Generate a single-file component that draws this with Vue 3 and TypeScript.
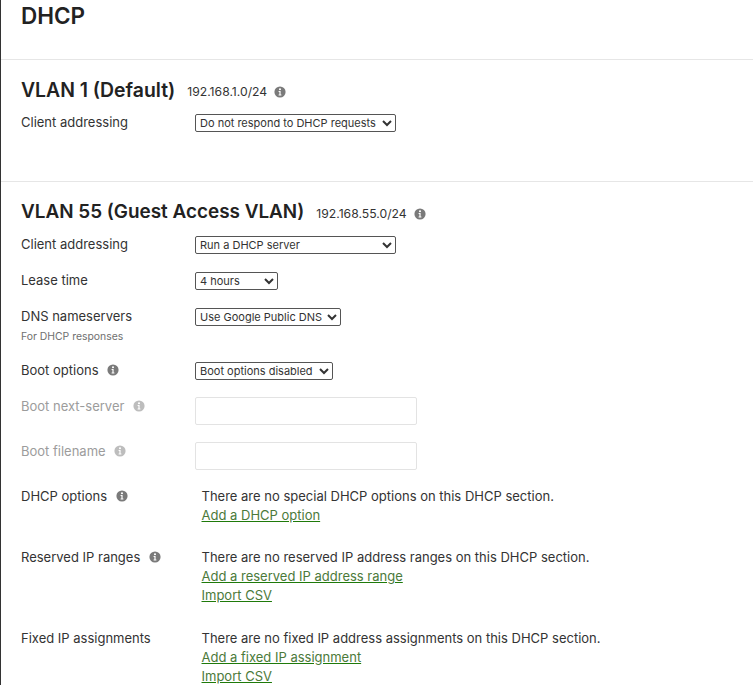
<template>
  <div class="page">
    <h1 class="title">DHCP</h1>

    <section class="vlan first">
      <div class="vlan-head">
        <h2>VLAN 1 (Default)</h2>
        <span class="subnet">192.168.1.0/24</span>
        <svg class="info" viewBox="0 0 12 12"><use href="#info-icon" /></svg>
      </div>
      <div class="row">
        <label>Client addressing</label>
        <select class="w-wide">
          <option>Do not respond to DHCP requests</option>
        </select>
      </div>
    </section>

    <section class="vlan second">
      <div class="vlan-head">
        <h2>VLAN 55 (Guest Access VLAN)</h2>
        <span class="subnet">192.168.55.0/24</span>
        <svg class="info" viewBox="0 0 12 12"><use href="#info-icon" /></svg>
      </div>

      <div v-for="row in selectRows" :key="row.label" class="row" :class="row.cls">
        <label>
          {{ row.label }}
          <svg v-if="row.info" class="info" viewBox="0 0 12 12"><use href="#info-icon" /></svg>
          <small v-if="row.hint">{{ row.hint }}</small>
        </label>
        <select :class="row.width">
          <option>{{ row.value }}</option>
        </select>
      </div>

      <div v-for="name in disabledRows" :key="name" class="row input-row">
        <label class="disabled">
          {{ name }}
          <svg class="info" viewBox="0 0 12 12"><use href="#info-icon" /></svg>
        </label>
        <input type="text" disabled />
      </div>

      <div v-for="block in textRows" :key="block.label" class="row text-row" :class="block.cls">
        <label>
          {{ block.label }}
          <svg v-if="block.info" class="info" viewBox="0 0 12 12"><use href="#info-icon" /></svg>
        </label>
        <div class="text-body">
          <p>{{ block.text }}</p>
          <a v-for="link in block.links" :key="link" href="#">{{ link }}</a>
        </div>
      </div>
    </section>

    <svg class="defs" width="0" height="0">
      <symbol id="info-icon" viewBox="0 0 12 12">
        <path
          fill-rule="evenodd"
          d="M6 .4a5.6 5.6 0 1 1 0 11.2A5.6 5.6 0 0 1 6 .4ZM6 2.2a1.05 1.05 0 1 0 0 2.1 1.05 1.05 0 0 0 0-2.1ZM4.6 5v1h.8v2.6h-.8v1h2.8v-1h-.8V5H4.6Z"
        />
      </symbol>
    </svg>
  </div>
</template>

<script setup lang="ts">
interface SelectRow {
  label: string
  value: string
  width: string
  info?: boolean
  hint?: string
  cls?: string
}

interface TextRow {
  label: string
  text: string
  links: string[]
  info?: boolean
  cls?: string
}

const selectRows: SelectRow[] = [
  { label: 'Client addressing', value: 'Run a DHCP server', width: 'w-wide' },
  { label: 'Lease time', value: '4 hours', width: 'w-lease' },
  { label: 'DNS nameservers', value: 'Use Google Public DNS', width: 'w-dns', hint: 'For DHCP responses', cls: 'has-hint' },
  { label: 'Boot options', value: 'Boot options disabled', width: 'w-boot', info: true }
]

const disabledRows = ['Boot next-server', 'Boot filename']

const textRows: TextRow[] = [
  {
    label: 'DHCP options',
    text: 'There are no special DHCP options on this DHCP section.',
    links: ['Add a DHCP option'],
    info: true,
    cls: 'options'
  },
  {
    label: 'Reserved IP ranges',
    text: 'There are no reserved IP address ranges on this DHCP section.',
    links: ['Add a reserved IP address range', 'Import CSV'],
    info: true
  },
  {
    label: 'Fixed IP assignments',
    text: 'There are no fixed IP address assignments on this DHCP section.',
    links: ['Add a fixed IP assignment', 'Import CSV']
  }
]
</script>

<style>
html,
body {
  background: #fff;
  overflow: hidden;
}
</style>

<style scoped>
.page {
  height: 685px;
  overflow: hidden;
  box-sizing: border-box;
  border-left: 1px solid #333;
  color: #333;
  font-family: Inter, "Liberation Sans", sans-serif;
  font-size: 13px;
}

.title {
  margin: 0;
  padding: 2px 20px 0;
  height: 59px;
  box-sizing: border-box;
  font-size: 22.5px;
  line-height: 28px;
  font-weight: 600;
  color: #222;
}

.vlan {
  border-top: 1px solid #e6e6e6;
  padding: 16px 20px 0;
}

.vlan.first {
  height: 122px;
  box-sizing: border-box;
}

.vlan.second {
  padding-top: 17px;
}

.vlan-head {
  display: flex;
  align-items: center;
  height: 26px;
  margin-bottom: 11px;
}

.first .vlan-head {
  position: relative;
  top: 1px;
}

.second .vlan-head {
  margin-bottom: 10px;
}

.vlan-head h2 {
  margin: 0;
  font-size: 18.9px;
  line-height: 26px;
  font-weight: 600;
  color: #222;
}

.first h2 {
  font-size: 19.4px;
}

.subnet {
  margin-left: 12px;
  margin-top: 3px;
  font-size: 12.2px;
  color: #333;
}

.vlan-head .info {
  margin-left: 7px;
  margin-top: 3px;
}

.info {
  width: 12px;
  height: 12px;
  fill: #7a7a7a;
  vertical-align: -1px;
  margin-left: 5px;
}

.row {
  display: flex;
  align-items: flex-start;
  height: 36px;
}

.row label {
  width: 174px;
  flex: none;
  line-height: 18px;
}

.row small {
  display: block;
  margin-top: 5px;
  font-size: 10.4px;
  line-height: 14px;
  color: #6f6f6f;
}

.has-hint {
  height: 54px;
}

select {
  height: 18px;
  margin-top: 1px;
  box-sizing: border-box;
  padding: 0;
  border: 1px solid #555;
  border-radius: 2px;
  background-color: #fff;
  color: #333;
  font-family: Inter, "Liberation Sans", sans-serif;
  font-size: 11px;
}

.w-wide {
  width: 201px;
}

.w-lease {
  width: 83px;
}

.w-dns {
  width: 146px;
}

.w-boot {
  width: 138px;
}

.input-row {
  height: 45px;
}

.disabled {
  color: #9c9c9c;
}

.disabled .info {
  fill: #bdbdbd;
}

input {
  width: 222px;
  height: 28px;
  box-sizing: border-box;
  border: 1px solid #e3e3e3;
  border-radius: 2px;
  background: #fff;
  padding: 0 6px;
}

.text-row {
  height: 81px;
}

.text-row.options {
  height: 61px;
}

.text-body {
  padding-left: 6.5px;
  line-height: 19px;
}

.text-body p {
  margin: 0;
}

.text-body a {
  display: block;
  width: fit-content;
  color: #4b7a3a;
  text-decoration: underline;
  text-decoration-color: #1f7a0a;
}

.defs {
  position: absolute;
}
</style>
